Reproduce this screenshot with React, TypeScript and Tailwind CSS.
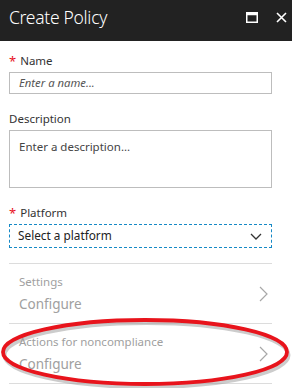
import React from "react";

const font = { fontFamily: '"Segoe UI", "Noto Sans", "Open Sans", sans-serif' };

function ChevronRight() {
  return (
    <svg width="9" height="16" viewBox="0 0 9 16" className="shrink-0">
      <path d="M1 1 L8 8 L1 15" fill="none" stroke="#a8a8a8" strokeWidth="1.2" />
    </svg>
  );
}

function Row({ label, value }: { label: string; value: string }) {
  return (
    <div className="flex items-center justify-between h-[60px] border-b border-[#dcdcdc] pl-[10px] pr-[4px]">
      <div className="flex flex-col">
        <span className="text-[11.5px] leading-[16px] text-[#a0a0a0]">{label}</span>
        <span className="text-[13.5px] leading-[20px] text-[#a0a0a0] mt-[4px]">{value}</span>
      </div>
      <ChevronRight />
    </div>
  );
}

export default function App() {
  return (
    <div className="relative w-[292px] h-[388px] bg-white overflow-hidden" style={font}>
      <div className="h-[41px] bg-[#222222] flex items-center justify-between pl-[9px] pr-[5px]">
        <span className="text-[17.5px] tracking-[-0.3px] text-white font-light leading-none -mt-[6px]">Create Policy</span>
        <div className="flex items-center gap-[18px] -mt-[6px]">
          <svg width="12" height="11" viewBox="0 0 12 11">
            <rect x="0.75" y="0.75" width="10.5" height="9.5" fill="none" stroke="white" strokeWidth="1.5" />
            <rect x="0.75" y="0.75" width="10.5" height="2.5" fill="white" />
          </svg>
          <svg width="11" height="11" viewBox="0 0 11 11">
            <path d="M1 1 L10 10 M10 1 L1 10" stroke="white" strokeWidth="1.6" />
          </svg>
        </div>
      </div>

      <div className="pl-[9px] pr-[20px] pt-[11px]">
        <div className="flex items-center gap-[4px] text-[11.5px] leading-[18px] text-[#333]">
          <span className="text-[#e81123] text-[13px]">*</span>
          <span>Name</span>
        </div>
        <div className="mt-[2px] h-[22px] border border-[#bdbdbd] flex items-center px-[9px]">
          <span className="text-[11.3px] italic text-[#555]">Enter a name...</span>
        </div>

        <div className="mt-[16px] text-[11.5px] leading-[18px] text-[#333]">Description</div>
        <div className="mt-[2px] h-[58px] border border-[#bdbdbd] px-[9px] pt-[2px]">
          <span className="text-[11.5px] text-[#444]">Enter a description...</span>
        </div>

        <div className="mt-[16px] flex items-center gap-[4px] text-[11.5px] leading-[18px] text-[#333]">
          <span className="text-[#e81123] text-[13px]">*</span>
          <span>Platform</span>
        </div>
        <div className="mt-[2px] h-[24px] border border-dashed border-[#1589c6] flex items-center justify-between pl-[8px] pr-[9px]">
          <span className="text-[11.8px] text-[#222]">Select a platform</span>
          <svg width="12" height="7" viewBox="0 0 12 7">
            <path d="M1 1 L6 6 L11 1" fill="none" stroke="#333" strokeWidth="1.3" />
          </svg>
        </div>

        <div className="mt-[15px] border-t border-[#dcdcdc]" />
      </div>

      <div className="ml-[9px] mr-[20px]">
        <Row label="Settings" value="Configure" />
        <Row label="Actions for noncompliance" value="Configure" />
      </div>

      <svg className="absolute left-0 top-[315px] pointer-events-none" width="292" height="73" viewBox="0 0 292 73">
        <ellipse cx="145" cy="38" rx="142" ry="32" fill="none" stroke="#9a9a9a" strokeOpacity="0.5" strokeWidth="4" transform="translate(1.5 2)" />
        <ellipse cx="145" cy="37" rx="142" ry="32" fill="none" stroke="#e8141c" strokeWidth="3.8" />
      </svg>
    </div>
  );
}
